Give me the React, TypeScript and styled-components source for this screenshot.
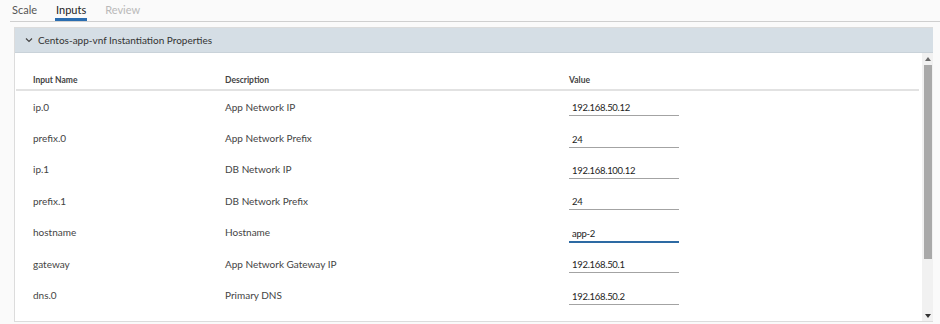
import React from 'react'
import styled, { createGlobalStyle } from 'styled-components'

const Global = createGlobalStyle`
  html, body {
    margin: 0;
    background: #fafafa;
    font-family: Lato, "Open Sans", sans-serif;
    color: #333;
  }
`

const Page = styled.div`
  width: 940px;
  height: 324px;
  overflow: hidden;
  box-sizing: border-box;
`

const TabBar = styled.div`
  display: flex;
  margin-left: 10px;
  height: 22px;
  border-bottom: 1px solid #cfcfcf;
  box-sizing: border-box;
  padding-left: 1px;
  gap: 17px;
`

const Tab = styled.div<{ $active?: boolean; $disabled?: boolean }>`
  font-size: 11px;
  padding: 3px 1px 0;
  height: 21px;
  box-sizing: border-box;
  color: ${p => (p.$disabled ? '#b9b9b9' : p.$active ? '#222' : '#555')};
  border-bottom: 3px solid ${p => (p.$active ? '#2a6db0' : 'transparent')};
`

const Panel = styled.div`
  margin: 5px 7px 0 14px;
  border: 1px solid #dcdcdc;
  border-right: none;
  background: #fff;
  height: 293px;
  display: flex;
  flex-direction: column;
`

const PanelHeader = styled.div`
  height: 24px;
  background: #d5dee5;
  border-bottom: 1px solid #c9d2d9;
  display: flex;
  align-items: center;
  padding-left: 10px;
  gap: 5px;
  font-size: 10px;
  color: #333;
`

const PanelBody = styled.div`
  flex: 1;
  display: flex;
  min-height: 0;
`

const TableArea = styled.div`
  flex: 1;
  padding: 0 3px 0 1px;
`

const HeadRow = styled.div`
  display: grid;
  grid-template-columns: 192px 344px 1fr;
  padding-left: 17px;
  height: 38px;
  align-items: end;
  padding-bottom: 4px;
  box-sizing: border-box;
  border-bottom: 2px solid #e2e2e2;
  font-size: 8.5px;
  font-weight: 700;
  color: #444;
`

const Row = styled.div`
  display: grid;
  grid-template-columns: 192px 344px 1fr;
  padding-left: 17px;
  height: 31.4px;
  align-items: center;
  font-size: 10px;
  color: #444;
`

const ValueInput = styled.div<{ $focused?: boolean }>`
  width: 110px;
  box-sizing: border-box;
  padding: 5px 3px 2px;
  font-size: 9.5px;
  letter-spacing: -0.3px;
  color: #222;
  border-bottom: ${p => (p.$focused ? '2px solid #2d6aa3' : '1px solid #a3a3a3')};
  margin-bottom: ${p => (p.$focused ? '-1px' : '0')};
`

const Scrollbar = styled.div`
  width: 11px;
  background: #f1f1f1;
  display: flex;
  flex-direction: column;
  align-items: center;
`

const Arrow = styled.div`
  height: 11px;
  display: flex;
  align-items: center;
  justify-content: center;
`

const Thumb = styled.div`
  width: 8px;
  height: 194px;
  background: #a9a9a9;
  margin-top: 1px;
`

const Track = styled.div`
  flex: 1;
`

const rows = [
  { name: 'ip.0', desc: 'App Network IP', value: '192.168.50.12' },
  { name: 'prefix.0', desc: 'App Network Prefix', value: '24' },
  { name: 'ip.1', desc: 'DB Network IP', value: '192.168.100.12' },
  { name: 'prefix.1', desc: 'DB Network Prefix', value: '24' },
  { name: 'hostname', desc: 'Hostname', value: 'app-2', focused: true },
  { name: 'gateway', desc: 'App Network Gateway IP', value: '192.168.50.1' },
  { name: 'dns.0', desc: 'Primary DNS', value: '192.168.50.2' },
]

export default function App() {
  return (
    <Page>
      <Global />
      <TabBar>
        <Tab>Scale</Tab>
        <Tab $active>Inputs</Tab>
        <Tab $disabled>Review</Tab>
      </TabBar>
      <Panel>
        <PanelHeader>
          <svg width="8" height="8" viewBox="0 0 8 8">
            <path d="M1 2.5 L4 5.5 L7 2.5" fill="none" stroke="#444" strokeWidth="1.2" />
          </svg>
          Centos-app-vnf Instantiation Properties
        </PanelHeader>
        <PanelBody>
          <TableArea>
            <HeadRow>
              <span>Input Name</span>
              <span>Description</span>
              <span>Value</span>
            </HeadRow>
            {rows.map(r => (
              <Row key={r.name}>
                <span>{r.name}</span>
                <span>{r.desc}</span>
                <ValueInput $focused={r.focused}>{r.value}</ValueInput>
              </Row>
            ))}
          </TableArea>
          <Scrollbar>
            <Arrow>
              <svg width="6" height="4" viewBox="0 0 6 4">
                <path d="M0 4 L3 0 L6 4 Z" fill="#6a6a6a" />
              </svg>
            </Arrow>
            <Thumb />
            <Track />
            <Arrow>
              <svg width="6" height="4" viewBox="0 0 6 4">
                <path d="M0 0 L6 0 L3 4 Z" fill="#333" />
              </svg>
            </Arrow>
          </Scrollbar>
        </PanelBody>
      </Panel>
    </Page>
  )
}
